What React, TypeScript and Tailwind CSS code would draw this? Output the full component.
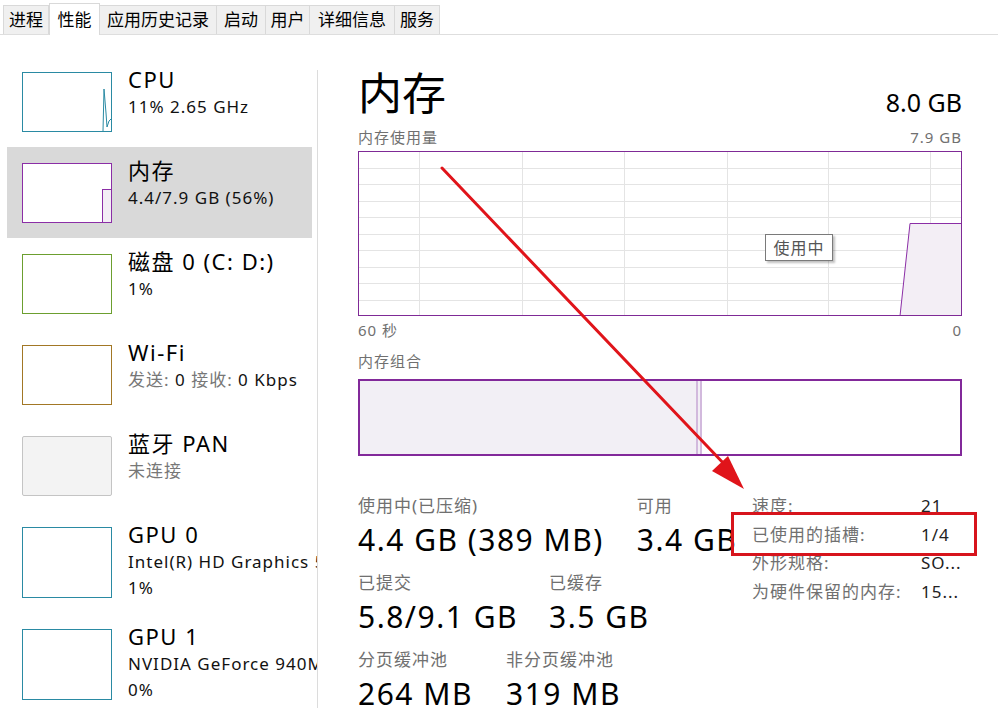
import React from "react";

const tabs = [
  { t: "进程", w: "w-[46px]" },
  { t: "性能", w: "w-[51px]", active: true },
  { t: "应用历史记录", w: "w-[118px]" },
  { t: "启动", w: "w-[50px]" },
  { t: "用户", w: "w-[45px]" },
  { t: "详细信息", w: "w-[86px]" },
  { t: "服务", w: "w-[46px]" },
];

function Thumb({ color, tall, children, bg }: { color: string; tall?: boolean; children?: React.ReactNode; bg?: string }) {
  return (
    <div className={`relative shrink-0 w-[90px] ${tall ? "h-[71px]" : "h-[60px]"} border ${color} ${bg ?? "bg-white"}`}>
      {children}
    </div>
  );
}

function SideItem({
  thumb,
  title,
  lines,
  selected,
  tall,
}: {
  thumb: React.ReactNode;
  title: string;
  lines: { text: React.ReactNode; gray?: boolean }[];
  selected?: boolean;
  tall?: boolean;
}) {
  return (
    <div className={`flex items-start w-[305px] ${tall ? "h-[102px]" : "h-[91px]"} pt-[16px] pl-[15px] ${selected ? "bg-[#d9d9d9]" : ""}`}>
      {thumb}
      <div className="ml-[16px] -mt-[8px] whitespace-nowrap">
        <div className="text-[22px] leading-[30px] tracking-[1.5px] text-black">{title}</div>
        {lines.map((l, i) => (
          <div key={i} className={`text-[17px] leading-[26px] tracking-[1px] ${l.gray ? "text-[#777]" : "text-[#111]"}`}>
            {l.text}
          </div>
        ))}
      </div>
    </div>
  );
}

function UsageChart() {
  const w = 604;
  const h = 165;
  const vx = [61, 164, 266, 369, 470, 572];
  const hy = Array.from({ length: 9 }, (_, i) => (i + 1) * 16.5);
  return (
    <div className="relative w-[604px] h-[165px]">
      <svg width={w} height={h} className="absolute inset-0">
        {vx.map((x) => (
          <line key={x} x1={x + 0.5} y1={0} x2={x + 0.5} y2={h} stroke="#e4e4e4" strokeWidth={1} />
        ))}
        {hy.map((y) => (
          <line key={y} x1={0} y1={Math.round(y) + 0.5} x2={w} y2={Math.round(y) + 0.5} stroke="#e4e4e4" strokeWidth={1} />
        ))}
        <polygon points="542,165 552,72 604,72 604,165" fill="#f3eef5" stroke="none" />
        <polyline points="542,165 552,72.5 604,72.5" fill="none" stroke="#8b2ea6" strokeWidth={1} />
        <rect x={0.5} y={0.5} width={w - 1} height={h - 1} fill="none" stroke="#7f2a96" strokeWidth={1} />
      </svg>
      <div className="absolute left-[407px] top-[83px] w-[68px] h-[27px] border border-[#7a7a7a] bg-white shadow-[2px_2px_2px_rgba(0,0,0,0.25)] flex items-center justify-center text-[16px] tracking-[1px] text-[#555]">
        使用中
      </div>
    </div>
  );
}

function Stat({ label, value }: { label: string; value: string }) {
  return (
    <div className="whitespace-nowrap">
      <div className="text-[17px] leading-[24px] tracking-[1px] text-[#707070]">{label}</div>
      <div className="text-[30px] leading-[44px] tracking-[1.5px] text-black">{value}</div>
    </div>
  );
}

export default function App() {
  return (
    <div className="relative w-[998px] h-[708px] overflow-hidden bg-white font-['Noto_Sans','Noto_Sans_CJK_SC',sans-serif]">
      {/* tab bar */}
      <div className="flex items-end h-[35px] pl-[3px] border-b border-[#dedede]">
        {tabs.map((t) =>
          t.active ? (
            <div
              key={t.t}
              className={`${t.w} h-[32px] -mb-px bg-white border border-b-0 border-[#d9d9d9] flex items-center justify-center text-[17px] text-black`}
            >
              {t.t}
            </div>
          ) : (
            <div
              key={t.t}
              className={`${t.w} h-[29px] bg-[#f0f0f0] border border-b-0 border-[#d9d9d9] -ml-px first:ml-0 flex items-center justify-center text-[17px] text-black`}
            >
              {t.t}
            </div>
          )
        )}
      </div>

      <div className="flex">
        {/* sidebar */}
        <div className="flex w-[318px] shrink-0">
          <div className="w-[317px] overflow-hidden pl-[7px] pt-[21px]">
            <SideItem
              thumb={
                <Thumb color="border-[#2a8aa3]">
                  <svg width="88" height="58" className="absolute inset-0">
                    <polyline points="80,58 81,16 83,40 84,54 86,48 88,46" fill="none" stroke="#2a8aa3" strokeWidth="1" />
                  </svg>
                </Thumb>
              }
              title="CPU"
              lines={[{ text: "11%  2.65 GHz" }]}
            />
            <SideItem
              selected
              thumb={
                <Thumb color="border-[#8b2ea6]">
                  <div className="absolute right-0 bottom-0 w-[9px] h-[33px] border-l border-t border-[#8b2ea6] bg-[#f3eef5]" />
                </Thumb>
              }
              title="内存"
              lines={[{ text: "4.4/7.9 GB (56%)" }]}
            />
            <SideItem thumb={<Thumb color="border-[#6c9f2f]" />} title="磁盘 0 (C: D:)" lines={[{ text: "1%" }]} />
            <SideItem
              thumb={<Thumb color="border-[#a27725]" />}
              title="Wi-Fi"
              lines={[
                {
                  text: (
                    <>
                      <span className="text-[#777]">发送:</span> 0 <span className="text-[#777]">接收:</span> 0 Kbps
                    </>
                  ),
                },
              ]}
            />
            <SideItem
              thumb={<Thumb color="border-[#c4c4c4] rounded-[2px]" bg="bg-[#f3f3f3]" />}
              title="蓝牙 PAN"
              lines={[{ text: "未连接", gray: true }]}
            />
            <SideItem
              tall
              thumb={<Thumb tall color="border-[#2a8aa3]" />}
              title="GPU 0"
              lines={[{ text: "Intel(R) HD Graphics 520" }, { text: "1%" }]}
            />
            <SideItem
              tall
              thumb={<Thumb tall color="border-[#2a8aa3]" />}
              title="GPU 1"
              lines={[{ text: "NVIDIA GeForce 940MX" }, { text: "0%" }]}
            />
          </div>
          <div className="w-px bg-[#dcdcdc] mt-[35px]" />
        </div>

        {/* main */}
        <div className="flex-1 pl-[40px] pr-[36px] pt-[32px]">
          <div className="flex items-end justify-between">
            <div className="text-[44px] leading-[52px] text-black">内存</div>
            <div className="text-[25px] leading-[34px] text-black">8.0 GB</div>
          </div>
          <div className="flex justify-between mt-[8px] text-[15px] leading-[20px] tracking-[1px] text-[#707070]">
            <span>内存使用量</span>
            <span>7.9 GB</span>
          </div>
          <div className="mt-[4px]">
            <UsageChart />
          </div>
          <div className="flex justify-between mt-[4px] text-[15px] leading-[20px] tracking-[1px] text-[#707070]">
            <span>60 秒</span>
            <span>0</span>
          </div>
          <div className="mt-[11px] text-[15px] leading-[20px] tracking-[1px] text-[#707070]">内存组合</div>
          <div className="mt-[8px] h-[77px] w-[604px] border-2 border-[#82299a] flex">
            <div className="w-[336px] bg-[#f2eff5]" />
            <div className="w-[6px] bg-[#f2eff5] border-x-2 border-[#d2b9dd]" />
            <div className="flex-1 bg-white" />
          </div>

          <div className="flex items-start mt-[38px]">
            <div className="w-[394px] shrink-0 flex flex-col gap-[9px]">
              <div className="flex gap-[33px]">
                <Stat label="使用中(已压缩)" value="4.4 GB (389 MB)" />
                <Stat label="可用" value="3.4 GB" />
              </div>
              <div className="flex gap-[31px]">
                <Stat label="已提交" value="5.8/9.1 GB" />
                <Stat label="已缓存" value="3.5 GB" />
              </div>
              <div className="flex gap-[33px]">
                <Stat label="分页缓冲池" value="264 MB" />
                <Stat label="非分页缓冲池" value="319 MB" />
              </div>
            </div>
            <div className="-mt-[2px] grid grid-cols-[169px_auto] content-start text-[17px] leading-[28.5px] tracking-[1px] whitespace-nowrap">
              <span className="text-[#707070]">速度:</span>
              <span className="text-[#222]">21</span>
              <span className="text-[#707070]">已使用的插槽:</span>
              <span className="text-[#222]">1/4</span>
              <span className="text-[#707070]">外形规格:</span>
              <span className="text-[#222]">SO...</span>
              <span className="text-[#707070]">为硬件保留的内存:</span>
              <span className="text-[#222]">15...</span>
            </div>
          </div>
        </div>
      </div>

      {/* annotation overlays */}
      <div className="absolute left-[731px] top-[512px] w-[246px] h-[44px] border-[3px] border-[#d7141c] pointer-events-none" />
      <svg width="998" height="708" className="absolute inset-0 pointer-events-none">
        <line x1="442" y1="168" x2="727" y2="467" stroke="#e0141a" strokeWidth="3" strokeLinecap="round" />
        <polygon points="744,489 712,471 728,456" fill="#e0141a" />
      </svg>
    </div>
  );
}
